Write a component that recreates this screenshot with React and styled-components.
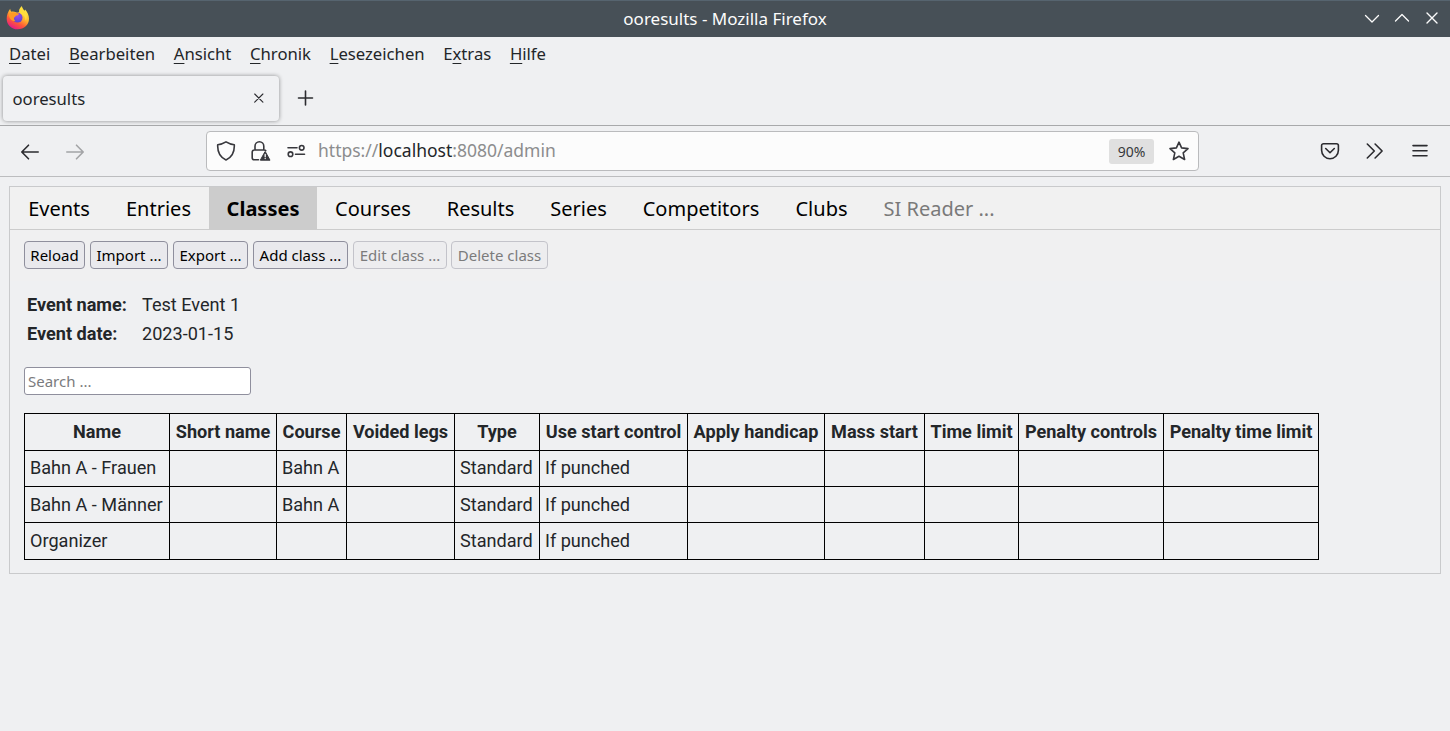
import React from "react";
import styled, { createGlobalStyle } from "styled-components";

const GlobalStyle = createGlobalStyle`
  * { box-sizing: border-box; }
  body {
    margin: 0;
    background: #eff0f1;
    color: #232629;
    font-family: "Noto Sans", sans-serif;
    overflow: hidden;
  }
`;

const Window = styled.div`
  display: flex;
  flex-direction: column;
  height: 731px;
  background: #eff0f2;
`;

const TitleBar = styled.header`
  display: grid;
  grid-template-columns: 120px 1fr 120px;
  align-items: center;
  height: 37px;
  flex: none;
  background: #475057;
  border-top: 1px solid #56646f;
  color: #fcfcfc;
  font-size: 17px;
`;

const Logo = styled.svg`
  display: block;
  width: 24px;
  height: 24px;
  margin: 0 0 2px 6px;
`;

const Title = styled.div`
  text-align: center;
  line-height: 24px;
`;

const WindowButtons = styled.div`
  display: flex;
  justify-content: flex-end;
  gap: 14px;
  padding: 0 10px 2px 0;
`;

const Icon = styled.svg`
  display: block;
  flex: none;
  width: ${(p) => p.$size || 20}px;
  height: ${(p) => p.$size || 20}px;
  fill: none;
  stroke: ${(p) => p.$color || "#2b2b2f"};
  stroke-width: ${(p) => p.$weight || 1.6};
  stroke-linecap: round;
  stroke-linejoin: round;
`;

const MenuBar = styled.nav`
  display: flex;
  gap: 18.6px;
  height: 36px;
  flex: none;
  padding: 5px 0 0 9px;
  font-size: 16.7px;
  line-height: 24px;
`;

const Key = styled.span`
  text-decoration: underline;
  text-decoration-thickness: 1px;
  text-underline-offset: 3px;
`;

const TabStrip = styled.div`
  display: flex;
  height: 53px;
  flex: none;
  padding: 3px 0 0 3px;
  border-bottom: 1px solid #a8a9ab;
`;

const BrowserTab = styled.div`
  display: flex;
  align-items: center;
  justify-content: space-between;
  width: 276px;
  height: 45px;
  padding: 0 13px 0 9.5px;
  border-radius: 4px;
  background: #f0f1f3;
  box-shadow: 0 0 4px rgba(0, 0, 0, 0.42);
  font-size: 16.67px;
`;

const NewTab = styled.div`
  padding: 12px 0 0 16px;
`;

const NavBar = styled.div`
  display: flex;
  align-items: center;
  height: 51px;
  flex: none;
  border-bottom: 1px solid #bcbdbf;
`;

const History = styled.div`
  display: flex;
  gap: 25px;
  width: 206px;
  padding: 2px 0 0 20px;
`;

const UrlBar = styled.div`
  display: flex;
  align-items: center;
  width: 993px;
  height: 40px;
  padding: 0 9px;
  border: 1px solid #babbbd;
  border-radius: 4px;
  background: #fcfcfc;
`;

const Identity = styled.div`
  display: flex;
  gap: 15px;
`;

const Url = styled.div`
  flex: 1;
  margin-left: 12px;
  padding-bottom: 2px;
  color: #8c8d8e;
  font-size: 17.5px;
  line-height: 26px;
`;

const Host = styled.span`
  color: #232629;
`;

const Zoom = styled.div`
  width: 45px;
  height: 25px;
  margin-right: 15px;
  border-radius: 3px;
  background: #e0e0e0;
  color: #36383b;
  font-size: 14px;
  line-height: 26px;
  text-align: center;
`;

const BrowserActions = styled.div`
  display: flex;
  gap: 25px;
  margin-left: 121px;
`;

const Page = styled.main`
  margin: 9px 9px 0;
  height: 388px;
  border: 1px solid #c9cacc;
`;

const PageTabs = styled.nav`
  display: flex;
  height: 43px;
  border-bottom: 1px solid #ccc;
  background: #f1f1f1;
`;

const PageTab = styled.div`
  width: ${(p) => p.$width}px;
  height: ${(p) => (p.$active ? 43 : 42)}px;
  text-align: center;
  font-size: 20px;
  line-height: 43px;
  white-space: nowrap;
  font-weight: ${(p) => (p.$active ? 700 : 400)};
  color: ${(p) => (p.$disabled ? "#7a7a7a" : "#000")};
  background: ${(p) => (p.$active ? "#ccc" : "transparent")};
`;

const Toolbar = styled.div`
  display: flex;
  height: 51px;
  padding: 11px 0 0 14px;
  background: #f0f0f1;
`;

const Button = styled.button`
  width: ${(p) => p.$width}px;
  height: 28px;
  margin: 0 ${(p) => p.$gap ?? 5}px 0 0;
  padding: 0 0 2px;
  border: 1px solid #8f8f9d;
  border-radius: 4px;
  background: #e9e9ed;
  color: #000;
  font: 15px/26px "Noto Sans", sans-serif;
  white-space: nowrap;
  &:disabled {
    border-color: #c3c3ca;
    background: #ededef;
    color: #7b7b7c;
  }
`;

const Details = styled.dl`
  display: grid;
  grid-template-columns: 115px auto;
  margin: 9px 0 0 17px;
  font: 18.1px/29px Roboto, sans-serif;
`;

const Term = styled.dt`
  font-weight: 700;
`;

const Value = styled.dd`
  margin: 0;
`;

const Search = styled.input`
  display: block;
  width: 227px;
  height: 28px;
  margin: 19px 0 18px 14px;
  padding: 0 3px;
  border: 1px solid #8f8f9d;
  border-radius: 3px;
  background: #fff;
  font: 15px "Noto Sans", sans-serif;
  &::placeholder {
    color: #7a7b7d;
  }
`;

const Table = styled.table`
  width: 1295px;
  margin-left: 14px;
  table-layout: fixed;
  border-collapse: collapse;
  font: 18.1px/24px Roboto, sans-serif;
`;

const Col = styled.col`
  width: ${(p) => p.$width}px;
`;

const Row = styled.tr`
  height: ${(p) => p.$height}px;
`;

const HeadCell = styled.th`
  padding: 0;
  border: 1px solid #000;
  font-weight: 700;
  white-space: nowrap;
`;

const Cell = styled.td`
  padding: ${(p) => (p.$low ? "1px 0 0 5px" : "0 0 1px 5px")};
  border: 1px solid #000;
  white-space: nowrap;
`;

const menu = [
  ["", "D", "atei"],
  ["", "B", "earbeiten"],
  ["", "A", "nsicht"],
  ["", "C", "hronik"],
  ["", "L", "esezeichen"],
  ["E", "x", "tras"],
  ["", "H", "ilfe"],
];

const pageTabs = [
  ["Events", 98],
  ["Entries", 101],
  ["Classes", 108],
  ["Courses", 112],
  ["Results", 103],
  ["Series", 93],
  ["Competitors", 152],
  ["Clubs", 89],
  ["SI Reader ...", 146],
];

const buttons = [
  ["Reload", 61, 5],
  ["Import ...", 78, 5],
  ["Export ...", 75, 5],
  ["Add class ...", 95, 5],
  ["Edit class ...", 94, 4],
  ["Delete class", 97, 0],
];

const columns = [
  ["Name", 145],
  ["Short name", 107],
  ["Course", 70],
  ["Voided legs", 108],
  ["Type", 85],
  ["Use start control", 148],
  ["Apply handicap", 137],
  ["Mass start", 100],
  ["Time limit", 94],
  ["Penalty controls", 145],
  ["Penalty time limit", 155],
];

const rows = [
  { height: 36, cells: ["Bahn A - Frauen", "", "Bahn A", "", "Standard", "If punched", "", "", "", "", ""] },
  { height: 36, low: true, cells: ["Bahn A - Männer", "", "Bahn A", "", "Standard", "If punched", "", "", "", "", ""] },
  { height: 37, cells: ["Organizer", "", "", "", "Standard", "If punched", "", "", "", "", ""] },
];

function FirefoxLogo() {
  return (
    <Logo viewBox="0 0 24 24">
      <defs>
        <linearGradient id="flame" x1="0.8" y1="0.1" x2="0.3" y2="1">
          <stop offset="0" stopColor="#fff04a" />
          <stop offset="0.4" stopColor="#ffb52e" />
          <stop offset="0.68" stopColor="#ff5a36" />
          <stop offset="1" stopColor="#e5178b" />
        </linearGradient>
        <radialGradient id="globe" cx="0.5" cy="0.3" r="0.7">
          <stop offset="0" stopColor="#9b4dee" />
          <stop offset="1" stopColor="#5a45cf" />
        </radialGradient>
      </defs>
      <path
        fill="url(#flame)"
        d="M4.200 2.800c.1 1.500.6 2.400 1.300 2.900C7 5.400 8.500 5.600 10 6.300c1.200.4 2.400.3 3-.6-.1-2.200 1-4 2.900-5.400.3 2.100 1.200 3.200 2.600 4.400.4-.3.6-.7.6-1.300 2.300 2.400 3.900 5.700 3.900 9.400 0 6-4.900 10.500-11.300 10.500S.7 18.700.7 12.700c0-3.700 1.300-7 3.500-9.900z"
      />
      <circle cx="11.600" cy="11.700" r="4.900" fill="url(#globe)" />
      <path
        fill="#ff9a25"
        d="M2.600 8.500c2.500-2.500 5.200-2.700 7.400-1.700.7.500 1.700.7 3 .7-.3 1.400-1.300 1.900-2.800 2.100-.8.800-.7 1.400-2 2-.5 1.300 0 2.700 1.300 3.600C6 15.400 3.400 12.800 2.600 8.500z"
      />
      <path
        fill="#ffde3c"
        d="M15.900.3c.3 2.200 1.300 3.400 2.700 4.700 2.600 2.400 2.900 6.400 1.100 9.800-.3-3.600-1.700-5.200-3.700-6.400-2.700-1.600-3-5.500-.1-8.100z"
      />
    </Logo>
  );
}

export default function App() {
  return (
    <Window>
      <GlobalStyle />
      <TitleBar>
        <FirefoxLogo />
        <Title>ooresults - Mozilla Firefox</Title>
        <WindowButtons>
          <Icon $size={16} $color="#fcfcfc" $weight={1.3} viewBox="0 0 16 16">
            <path d="M1.500 5.500 8 12l6.500-6.500" />
          </Icon>
          <Icon $size={16} $color="#fcfcfc" $weight={1.3} viewBox="0 0 16 16">
            <path d="M1.500 11 8 4.500l6.500 6.500" />
          </Icon>
          <Icon $size={16} $color="#fcfcfc" $weight={1.4} viewBox="0 0 16 16">
            <path d="m3 3 10 10M13 3 3 13" />
          </Icon>
        </WindowButtons>
      </TitleBar>

      <MenuBar>
        {menu.map(([before, key, after]) => (
          <span key={key}>
            {before}
            <Key>{key}</Key>
            {after}
          </span>
        ))}
      </MenuBar>

      <TabStrip>
        <BrowserTab>
          ooresults
          <Icon $size={14} $weight={1.1} viewBox="0 0 14 14">
            <path d="m2.700 2 8.200 8.200M10.900 2 2.700 10.200" />
          </Icon>
        </BrowserTab>
        <NewTab>
          <Icon $weight={1.6} viewBox="0 0 20 20">
            <path d="M10.500 3v14M3.500 10h14" />
          </Icon>
        </NewTab>
      </TabStrip>

      <NavBar>
        <History>
          <Icon viewBox="0 0 20 20">
            <path d="M18.200 10H2M8.500 3.200 1.800 10l6.700 6.800" />
          </Icon>
          <Icon $color="#a3a4a6" viewBox="0 0 20 20">
            <path d="M1.800 10H18M11.500 3.200l6.700 6.800-6.700 6.800" />
          </Icon>
        </History>
        <UrlBar>
          <Identity>
            <Icon $color="#38383d" viewBox="0 0 20 20">
              <path d="M10 .9C7.500 2.500 4.700 3.500 1.700 3.700c-.3 5.900 1.500 12.300 8.300 15.300 6.800-3 8.600-9.400 8.300-15.300-3-.2-5.800-1.200-8.300-2.800z" />
            </Icon>
            <Icon $color="#38383d" viewBox="0 0 20 20">
              <path d="M4 9V5.200a4.200 4.200 0 0 1 8.800 0V9M7.500 18.800H3.200a2 2 0 0 1-2-2V11a2 2 0 0 1 2-2h10.200a1.800 1.800 0 0 1 1.300.6" />
              <path fill="#38383d" strokeWidth="1" d="M13.800 11 9.300 19.200h9.700L14.500 11z" />
              <path stroke="#fcfcfc" strokeWidth="1.300" d="M14.200 13.400v2.300M14.200 17.500v.1" />
            </Icon>
            <Icon $color="#38383d" viewBox="0 0 20 20">
              <path d="M2 6.800h9M9.500 13.200h9" />
              <circle cx="15.700" cy="6.800" r="2.300" />
              <circle cx="4.500" cy="13.200" r="2.300" />
            </Icon>
          </Identity>
          <Url>
            https://<Host>localhost</Host>:8080/admin
          </Url>
          <Zoom>90%</Zoom>
          <Icon $color="#38383d" viewBox="0 0 20 20">
            <path d="m10 1.200 2.600 5.700 6.400.7-4.800 4.200 1.400 6.700-5.600-3.300-5.600 3.300 1.400-6.700L1 7.600l6.400-.7z" />
          </Icon>
        </UrlBar>
        <BrowserActions>
          <Icon viewBox="0 0 20 20">
            <path d="M3.500 2.700h13a1.900 1.900 0 0 1 1.900 1.900v4.700a8.400 8.400 0 0 1-16.800 0V4.600a1.900 1.900 0 0 1 1.900-1.900zM5.700 7.500l4.300 4.200 4.300-4.200" />
          </Icon>
          <Icon viewBox="0 0 20 20">
            <path d="m2.300 3 7 7-7 7M10.100 3l7 7-7 7" />
          </Icon>
          <Icon viewBox="0 0 20 20">
            <path d="M3 4.600h14M3 9.700h14M3 14.800h14" />
          </Icon>
        </BrowserActions>
      </NavBar>

      <Page>
        <PageTabs>
          {pageTabs.map(([label, width]) => (
            <PageTab
              key={label}
              $width={width}
              $active={label === "Classes"}
              $disabled={label.startsWith("SI")}
            >
              {label}
            </PageTab>
          ))}
        </PageTabs>
        <Toolbar>
          {buttons.map(([label, width, gap]) => (
            <Button
              key={label}
              $width={width}
              $gap={gap}
              disabled={label.startsWith("Edit") || label.startsWith("Delete")}
            >
              {label}
            </Button>
          ))}
        </Toolbar>
        <Details>
          <Term>Event name:</Term>
          <Value>Test Event 1</Value>
          <Term>Event date:</Term>
          <Value>2023-01-15</Value>
        </Details>
        <Search placeholder="Search ..." />
        <Table>
          <colgroup>
            {columns.map(([label, width]) => (
              <Col key={label} $width={width} />
            ))}
          </colgroup>
          <thead>
            <Row $height={37}>
              {columns.map(([label]) => (
                <HeadCell key={label}>{label}</HeadCell>
              ))}
            </Row>
          </thead>
          <tbody>
            {rows.map((row) => (
              <Row key={row.cells[0]} $height={row.height}>
                {row.cells.map((text, i) => (
                  <Cell key={i} $low={row.low}>{text}</Cell>
                ))}
              </Row>
            ))}
          </tbody>
        </Table>
      </Page>
    </Window>
  );
}
